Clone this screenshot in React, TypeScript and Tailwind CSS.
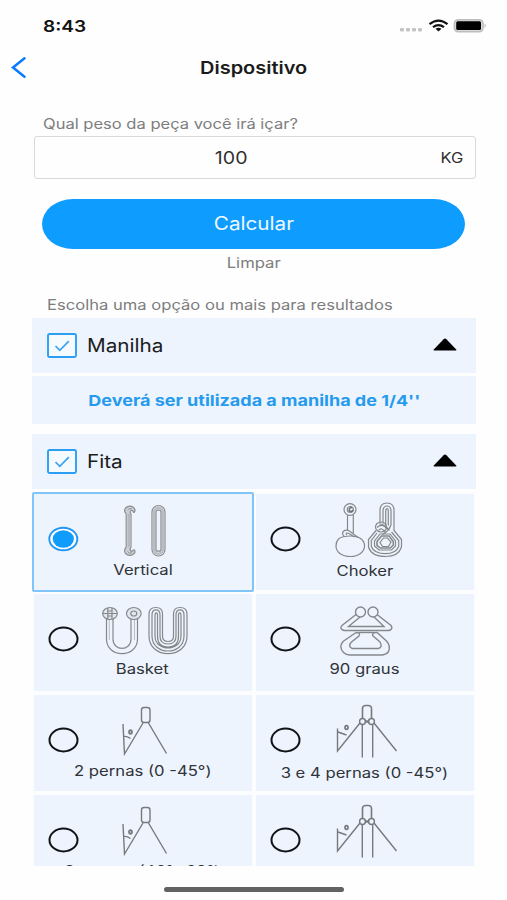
import React from "react";

type TextProps = { className: string; children: React.ReactNode };

function Text({ className, children }: TextProps) {
  return <span className={`block w-max whitespace-pre ${className}`}>{children}</span>;
}

function StatusBar() {
  return (
    <div className="flex h-[42px] items-start justify-between pl-[43px] pr-[20px] pt-[14px]">
      <Text className="origin-left scale-x-[1.19] text-[16px] font-semibold leading-6 text-[#111]">8:43</Text>
      <svg width="88" height="18" viewBox="0 0 88 18" className="mt-[3px]">
        <g fill="#c4c4c4">
          <rect x="1" y="11" width="4" height="3.6" rx="1" />
          <rect x="7" y="11" width="4" height="3.6" rx="1" />
          <rect x="13" y="11" width="4" height="3.6" rx="1" />
          <rect x="19" y="11" width="4" height="3.6" rx="1" />
        </g>
        <g fill="none" stroke="#111" strokeWidth="2.2">
          <path d="M30.5 7.2 Q39.5 0 48.5 7.2" />
          <path d="M34 10.2 Q39.5 6 45 10.2" />
        </g>
        <path d="M36.5 11.8 Q39.5 9.8 42.5 11.8 L39.5 14.4 Z" fill="#111" />
        <rect x="55.4" y="2.7" width="28.6" height="12" rx="3.8" fill="#ddd" stroke="#bdbdbd" strokeWidth="1.6" />
        <rect x="57.200" y="4.300" width="24.800" height="8.800" rx="1.500" fill="#000" />
        <path d="M85.600 6.500 Q87.800 8.600 85.600 10.800 Z" fill="#aaa" />
      </svg>
    </div>
  );
}

function CheckBox() {
  return (
    <svg width="30" height="25" viewBox="0 0 30 25">
      <rect x="1" y="1" width="28" height="23" rx="1.500" fill="#f5faff" stroke="#2c9ff5" strokeWidth="1.900" />
      <path d="M8.500 13 L12.800 17.400 L21.800 8.200" fill="none" stroke="#3ba3ef" strokeWidth="1.700" />
    </svg>
  );
}

function SectionHeader({ label }: { label: string }) {
  return (
    <div className="flex h-[55px] items-center bg-[#edf4fe] pl-[15px] pr-[19px]">
      <CheckBox />
      <Text className="ml-[10px] origin-left scale-x-[1.150] text-[18px] leading-6 text-[#1b1d20]">{label}</Text>
      <div className="grow" />
      <svg width="24" height="13" viewBox="0 0 24 13" className="-mt-[2px]">
        <path d="M1 11.200 L10.600 1.200 Q12 0 13.400 1.200 L23 11.200 Q24 12.500 22.400 12.500 L1.600 12.500 Q0 12.500 1 11.200Z" fill="#000" />
      </svg>
    </div>
  );
}

function Radio({ checked }: { checked?: boolean }) {
  return (
    <svg width="31" height="26" viewBox="0 0 31 26" className="col-start-1 row-start-1 ml-[16px] mt-[34px]">
      {checked ? (
        <>
          <ellipse cx="15.300" cy="13" rx="14" ry="11.300" fill="#fff" stroke="#2196f3" strokeWidth="1.900" />
          <ellipse cx="15.300" cy="13" rx="10.600" ry="8.700" fill="#109cfb" />
        </>
      ) : (
        <ellipse cx="15.500" cy="13" rx="14" ry="11.400" fill="none" stroke="#111417" strokeWidth="2" />
      )}
    </svg>
  );
}

function VerticalIcon() {
  return (
    <g fill="none" stroke="#8a8c8f" strokeWidth="1.200" transform="translate(4 2)">
      <path d="M25.200 19 V54 M30 20 V53" />
      <path d="M27.600 19 V54" stroke="#b4b7bb" strokeWidth="2.600" />
      <path d="M25 19.500 Q22.500 17 24.500 14 Q28 10.800 32 13 Q35 15.500 33.500 18 Q32.500 19 32 17 Q30 15.500 29 18 L30 20" fill="#cdd1d6" />
      <path d="M25 53.500 Q22.500 56.500 24.500 59.500 Q28 62.500 32 60.500 Q35 58.500 33.500 56 Q32 55.500 31.500 57 Q30 58 29 55.500 L30 53" fill="#cdd1d6" />
      <path d="M26.500 16 Q28 13.800 31 15 M26.500 57.500 Q28 60 31 58.800" strokeWidth="0.900" />
      <rect x="51" y="11.500" width="13" height="50.500" rx="6.500" />
      <rect x="53" y="13.700" width="9" height="46" rx="4.500" stroke="#b9bcc0" strokeWidth="2.500" />
      <rect x="55" y="16.200" width="5" height="41" rx="2" />
    </g>
  );
}

function ChokerIcon() {
  return (
    <g fill="none" stroke="#85888b" strokeWidth="1.200" transform="translate(13.500 0.500)">
      <ellipse cx="17.500" cy="17" rx="6" ry="5.800" />
      <ellipse cx="17.800" cy="17" rx="3" ry="3" />
      <path d="M19.500 15 Q16 15 17 18.500 Q19 20 20.500 17.500" stroke="#6f7275" strokeWidth="1.600" />
      <path d="M15 22.500 V37.500 M20.800 22 V41" />
      <path d="M6 46.500 C9 44 13 43.500 18 43.500 C27 43.500 32 47.500 32 53.500 C32 59.500 26 64 18 64 C9 64 3.500 59.500 3.500 53.500 C3.500 50.500 4.500 48 6 46.500" />
      <path d="M11.500 43.800 C8 40 12 36 17 38.500 L25.500 45 M14 42.500 Q13 39.500 16.500 41 L22 44.500" />
      <path d="M47.500 31 V18 Q47.500 10.500 54.500 10.500 Q61.500 10.500 61.500 18 V38 L69 47 V54.500 Q66 64 53 64 Q39 64 36 54.500 V47 L43.500 38" />
      <path d="M50.500 31 V19 Q50.500 13.500 54.500 13.500 Q58.500 13.500 58.500 19 V32 Q57 38 50 42 M53.200 33 V19 Q53.200 16.200 54.500 16.200 Q55.800 16.200 55.800 19 V33" />
      <ellipse cx="48.500" cy="34.500" rx="5.500" ry="5" />
      <path d="M44.500 35 Q50 30 55 37 M46 38 Q49 34 53 40 M47 31.500 Q53 32 57 38" />
      <path d="M44.500 40.500 L38.800 48 V54 Q41.500 61.200 53 61.200 Q63.500 61.200 66.200 54 V48 L59 39.500" />
      <path d="M47.500 41.500 L42 48.500 V53.500 L46.500 57.500 H59 L63 53.500 V48.500 L57.500 41.500Z" />
      <path d="M49 43.500 L44.500 49 V52.800 L47.800 55.500 H57.800 L60.800 52.500 V49 L56.500 43.500Z" strokeWidth="1.600" />
      <path d="M51 45.500 H55 L58.500 49.500 L56 54 H50 L47.500 50Z" fill="#edf4fe" />
    </g>
  );
}

function BasketIcon() {
  return (
    <g fill="none" stroke="#85888b" strokeWidth="1.200" transform="translate(2 5)">
      <path d="M7.500 22 V42 C7.500 61.500 38.500 61.500 38.500 42 V22 M14 22 V42 C14 54.500 32 54.500 32 42 V22" />
      <path d="M10.300 23 V43 M35.500 23 V43" strokeWidth="0.500" />
      <ellipse cx="11" cy="16.500" rx="7.300" ry="6" fill="#e1e7ef" />
      <path d="M8.800 11 V22 M13 11 V22 M4 16.500 H18 M8.800 14 H13 M8.800 19 H13" />
      <ellipse cx="34.800" cy="16.500" rx="7.300" ry="6" fill="#e1e7ef" />
      <ellipse cx="34.800" cy="16.500" rx="3" ry="2.500" />
      <path d="M50 17 Q50 10.500 57 10.500 Q63.500 10.500 63.500 17 V39 Q63.500 44.500 69 44.500 Q74.500 44.500 74.500 39 V17 Q74.500 10.500 81 10.500 Q88 10.500 88 17 V39 C88 62.500 50 62.500 50 39 Z" />
      <path d="M53 18 Q53 12.800 57 12.800 Q61 12.800 61 18 V39 Q61 47 69 47 Q77 47 77 39 V18 Q77 12.800 81 12.800 Q85 12.800 85 18 V39 C85 59 53 59 53 39 Z" />
      <path d="M56 18 Q56 15.800 57.200 15.800 Q58.500 15.800 58.500 18 V39 Q58.500 50 69 50 Q79.500 50 79.500 39 V18 Q79.500 15.800 80.800 15.800 Q82 15.800 82 18 V39 C82 55 56 55 56 39 Z" />
    </g>
  );
}

function NinetyIcon() {
  return (
    <g fill="none" stroke="#85888b" strokeWidth="1.400" transform="translate(16 5)">
      <path d="M21 17.500 L7 28.500 Q4 32 9 33.500 H54 Q58.500 32 56 28.500 L42 17.500 M25 20 L13.500 29.500 H49 L39 20" />
      <circle cx="25.500" cy="15" r="5" fill="#edf4fe" />
      <circle cx="38" cy="15" r="5" fill="#edf4fe" />
      <path d="M21 35.500 L8 44.500 Q3.500 50 8.500 55.500 Q11 58 15 58 H46 Q51 58 53.500 54.500 Q56 49 51.500 44 L42 35.500 Q37.500 35 37.500 38.500 L45 45 Q48 50 43.500 51.500 H17 Q12.500 49 16.500 45 L24 39 Q26 35.500 21 35.500" />
      <path d="M24 35.500 H39" />
    </g>
  );
}

function TwoLegsIcon() {
  return (
    <g fill="none" stroke="#777a7d" strokeWidth="1.400" transform="translate(3 2.500)">
      <rect x="41.500" y="12" width="8.500" height="15" rx="2.500" />
      <path d="M43 27.500 L24.500 58.500 L23 28.500 M48.500 27.500 L66.500 58 M23.500 41 Q27 40.500 30.500 43" />
      <ellipse cx="30.500" cy="36.500" rx="1.500" ry="1.900" strokeWidth="1.700" />
      <path d="M29 36.500 H32" strokeWidth="0.800" />
    </g>
  );
}

function FourLegsIcon() {
  return (
    <g fill="none" stroke="#777a7d" strokeWidth="1.400" transform="translate(16 2)">
      <path d="M27.500 24 V13.500 Q27.500 10.500 31 10.500 H33 Q36.500 10.500 36.500 13.500 V24" strokeWidth="1.600" />
      <path d="M25 28 L2.500 56 V33.500 M39 28 L61.500 56 M3 37 L11.500 40 M27.300 30 V62.500 M37.700 30 V62.500" />
      <ellipse cx="27.500" cy="26.500" rx="2.900" ry="3" fill="#edf4fe" />
      <ellipse cx="36.500" cy="26.500" rx="2.900" ry="3" fill="#edf4fe" />
      <path d="M30 25 L34 28 M34 25 L30 28" />
      <ellipse cx="11.500" cy="32.500" rx="1.500" ry="1.800" strokeWidth="1.700" />
    </g>
  );
}

type OptionProps = {
  label?: string;
  checked?: boolean;
  icon: React.ReactNode;
  labelClass?: string;
};

function Option({ label, checked, icon, labelClass = "" }: OptionProps) {
  const frame = checked
    ? "border-2 border-[#80c5fa] rounded-[2px] [&>*]:-m-[2px]"
    : "border-x-[2.5px] border-y-2 border-[#fcfdff] [&>*]:-mx-[2.5px] [&>*]:-my-[2px]";
  return (
    <div className={`h-[100.4px] bg-[#edf4fe] ${frame}`}>
      <div className="grid">
        <Radio checked={checked} />
        <div className="col-start-1 row-start-1 flex w-[222px] flex-col items-center">
          <svg width="92" height="68" viewBox="0 0 92 68">{icon}</svg>
          {label && (
            <Text className={`scale-x-[1.190] text-[14px] leading-5 text-[#303338] ${labelClass}`}>{label}</Text>
          )}
        </div>
      </div>
    </div>
  );
}

export default function App() {
  return (
    <main className="flex h-[900px] w-[507px] flex-col overflow-hidden bg-[#fefefe] font-['Inter','Liberation_Sans',sans-serif]">
      <StatusBar />
      <header className="grid h-[52px] grid-cols-[40px_1fr_40px] items-center pl-[9px] pr-[9px]">
        <svg width="20" height="24" viewBox="0 0 20 24">
          <path d="M15.500 2.300 L4 11.500 L15.500 20.700" fill="none" stroke="#087bff" strokeWidth="2.500" strokeLinecap="round" />
        </svg>
        <Text className="scale-x-[1.175] justify-self-center text-[17px] font-semibold leading-6 text-[#1b1b1b]">Dispositivo</Text>
      </header>
      <section className="flex flex-col pl-[34px] pr-[31px] pt-[18px]">
        <Text className="ml-[9px] origin-left scale-x-[1.180] text-[14px] leading-[24px] text-[#7d7d7d]">Qual peso da peça você irá içar?</Text>
        <div className="grid h-[43px] grid-cols-[44px_1fr_88px] items-center rounded-[3px] border border-[#d9d9d9] pr-[12px]">
          <Text className="col-start-2 ml-[9px] scale-x-[1.150] justify-self-center text-[17px] leading-6 text-[#303030]">100</Text>
          <Text className="origin-right scale-x-[1.180] justify-self-end text-[14px] leading-5 text-[#303030]">KG</Text>
        </div>
        <button className="ml-[8px] mr-[11px] mt-[20px] flex h-[50px] items-center justify-center rounded-[31px/25px] bg-[#0e9cff]">
          <Text className="scale-x-[1.150] text-[18px] leading-6 text-[#eef8ff]">Calcular</Text>
        </button>
        <Text className="-ml-[2px] mt-[3px] scale-x-[1.190] self-center text-[14px] leading-[22px] text-[#7d7d7d]">Limpar</Text>
        <Text className="ml-[13px] mt-[21px] origin-left scale-x-[1.185] text-[14px] leading-[20px] text-[#7d7d7d]">Escolha uma opção ou mais para resultados</Text>
      </section>
      <section className="ml-[32px] mt-[3px] flex w-[444px] flex-col">
        <SectionHeader label="Manilha" />
        <div className="mt-[3px] flex h-[48px] items-center justify-center bg-[#edf4fe]">
          <Text className="scale-x-[1.200] pt-[1px] text-[15px] font-bold leading-6 text-[#269bee]">Deverá ser utilizada a manilha de 1/4''</Text>
        </div>
        <div className="mt-[10px]">
          <SectionHeader label="Fita" />
        </div>
        <div className="mt-[3px] grid h-[374px] grid-cols-2 content-start overflow-hidden">
          <Option label="Vertical" checked icon={<VerticalIcon />} />
          <Option label="Choker" icon={<ChokerIcon />} labelClass="mt-[1px]" />
          <Option label="Basket" icon={<BasketIcon />} labelClass="-mt-[1px]" />
          <Option label="90 graus" icon={<NinetyIcon />} labelClass="-mt-[1px]" />
          <Option label="2 pernas (0 -45°)" icon={<TwoLegsIcon />} />
          <Option label="3 e 4 pernas (0 -45°)" icon={<FourLegsIcon />} labelClass="mt-[2px]" />
          <Option label="2 pernas (46° -60°)" icon={<TwoLegsIcon />} />
          <Option icon={<FourLegsIcon />} />
        </div>
      </section>
      <div className="ml-[164px] mt-[21px] h-[5px] w-[180px] shrink-0 rounded-full bg-[#626262]" />
    </main>
  );
}
